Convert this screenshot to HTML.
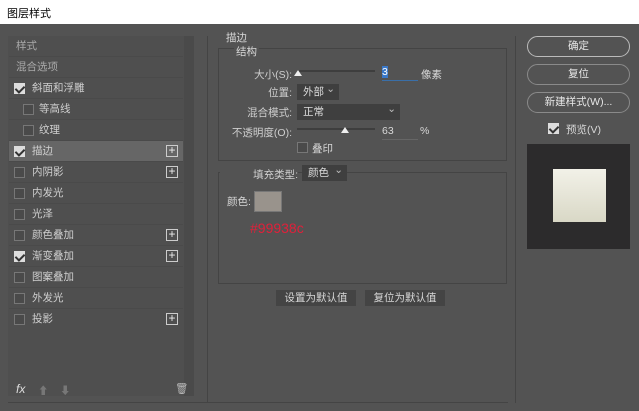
<!DOCTYPE html><html><head><meta charset="utf-8"><style>
*{margin:0;padding:0;box-sizing:border-box}
body{width:639px;height:411px;background:#535353;font-family:"Liberation Sans","Noto Sans CJK SC",sans-serif;font-size:10.5px;color:#d8d8d8;position:relative;overflow:hidden}
.a{position:absolute}
.title{left:0;top:0;width:639px;height:24px;background:#fff;color:#000;font-size:11px;padding:5px 7px}
.row{position:absolute;left:9px;width:174px;height:21px;border-bottom:1px solid #4a4a4a;line-height:20px;color:#cfcfcf}
.cb{position:absolute;width:11px;height:11px;border:1px solid #777;background:#4a4a4a;top:5px}
.cb.on{background:#ddd;border-color:#ddd}
.cb.on:after{content:"";position:absolute;left:2px;top:0px;width:4px;height:7px;border:solid #333;border-width:0 2px 2px 0;transform:rotate(45deg)}
.plus{position:absolute;left:166px;width:12px;height:12px;border:1px solid #ccc;color:#eee;font-size:12px;line-height:9px;text-align:center}
.btn{position:absolute;left:527px;width:103px;height:21px;border:1px solid #8a8a8a;border-radius:11px;text-align:center;line-height:19px;color:#e8e8e8}
.sel{position:absolute;background:#3f3f3f;height:16px;line-height:16px;padding-left:6px;color:#ddd}
.sel:after{content:"⌄";position:absolute;right:4px;top:-3px;color:#bbb}
.lbl{position:absolute;text-align:right;color:#cfcfcf}
</style></head><body>
<div class="a title">图层样式</div>
<div class="a" style="left:8px;top:36px;width:176px;height:360px;background:#4f4f4f"></div>
<div class="a" style="left:184px;top:36px;width:10px;height:360px;background:#4a4a4a"></div>
<div class="row" style="top:36px;padding-left:7px;color:#aaa">样式</div>
<div class="row" style="top:57px;padding-left:7px;color:#aaa">混合选项</div>
<div class="row" style="top:78px"><span class="cb on" style="left:5px"></span><span style="margin-left:23px">斜面和浮雕</span></div>
<div class="row" style="top:99px"><span class="cb" style="left:14px"></span><span style="margin-left:30px">等高线</span></div>
<div class="row" style="top:120px"><span class="cb" style="left:14px"></span><span style="margin-left:30px">纹理</span></div>
<div class="row" style="top:141px;background:#666"><span class="cb on" style="left:5px"></span><span style="margin-left:23px">描边</span><span class="plus" style="top:4px;left:157px">+</span></div>
<div class="row" style="top:162px"><span class="cb" style="left:5px"></span><span style="margin-left:23px">内阴影</span><span class="plus" style="top:4px;left:157px">+</span></div>
<div class="row" style="top:183px"><span class="cb" style="left:5px"></span><span style="margin-left:23px">内发光</span></div>
<div class="row" style="top:204px"><span class="cb" style="left:5px"></span><span style="margin-left:23px">光泽</span></div>
<div class="row" style="top:225px"><span class="cb" style="left:5px"></span><span style="margin-left:23px">颜色叠加</span><span class="plus" style="top:4px;left:157px">+</span></div>
<div class="row" style="top:246px"><span class="cb on" style="left:5px"></span><span style="margin-left:23px">渐变叠加</span><span class="plus" style="top:4px;left:157px">+</span></div>
<div class="row" style="top:267px"><span class="cb" style="left:5px"></span><span style="margin-left:23px">图案叠加</span></div>
<div class="row" style="top:288px"><span class="cb" style="left:5px"></span><span style="margin-left:23px">外发光</span></div>
<div class="row" style="top:309px;border:0"><span class="cb" style="left:5px"></span><span style="margin-left:23px">投影</span><span class="plus" style="top:4px;left:157px">+</span></div>
<div class="a" style="left:16px;top:382px;font-style:italic;color:#ddd;font-size:12px">fx</div>
<div class="a" style="left:38px;top:383px;color:#777">⬆</div>
<div class="a" style="left:60px;top:383px;color:#777">⬇</div>
<div class="a" style="left:175px;top:382px;color:#bbb">🗑</div>
<div class="a" style="left:8px;top:402px;width:500px;height:1px;background:#444"></div>
<div class="a" style="left:207px;top:36px;width:1px;height:367px;background:#444"></div>
<div class="a" style="left:515px;top:36px;width:1px;height:367px;background:#444"></div>
<div class="a" style="left:226px;top:30px">描边</div>
<div class="a" style="left:218px;top:48px;width:289px;height:113px;border:1px solid #444"></div>
<div class="a" style="left:234px;top:44px;background:#535353;padding:0 2px">结构</div>
<div class="lbl" style="left:220px;top:67px;width:72px">大小(S):</div>
<div class="a" style="left:297px;top:70px;width:78px;height:2px;background:#3e3e3e"></div>
<div class="a" style="left:294px;top:70px;width:0;height:0;border:4px solid transparent;border-bottom:6px solid #eee;border-top:0"></div>
<div class="a" style="left:382px;top:66px;width:36px;height:15px;border-bottom:1px solid #3a6fa8"><span style="background:#3a78c8;color:#fff">3</span></div>
<div class="a" style="left:421px;top:67px">像素</div>
<div class="lbl" style="left:220px;top:85px;width:72px">位置:</div>
<div class="sel" style="left:297px;top:84px;width:42px">外部</div>
<div class="lbl" style="left:220px;top:105px;width:72px">混合模式:</div>
<div class="sel" style="left:297px;top:104px;width:103px">正常</div>
<div class="lbl" style="left:210px;top:125px;width:82px">不透明度(O):</div>
<div class="a" style="left:297px;top:128px;width:78px;height:2px;background:#3e3e3e"></div>
<div class="a" style="left:341px;top:127px;width:0;height:0;border:4px solid transparent;border-bottom:6px solid #eee;border-top:0"></div>
<div class="a" style="left:382px;top:125px;width:36px;height:15px;border-bottom:1px solid #666">63</div>
<div class="a" style="left:420px;top:125px">%</div>
<span class="cb a" style="left:297px;top:142px"></span>
<div class="a" style="left:312px;top:141px">叠印</div>
<div class="a" style="left:218px;top:172px;width:289px;height:112px;border:1px solid #444"></div>
<div class="lbl" style="left:220px;top:167px;width:78px;background:#535353">填充类型:</div>
<div class="sel" style="left:302px;top:165px;width:45px">颜色</div>
<div class="a" style="left:227px;top:194px">颜色:</div>
<div class="a" style="left:254px;top:191px;width:28px;height:21px;background:#99938c;border:1px solid #777"></div>
<div class="a" style="left:250px;top:220px;color:#e0203a;font-size:14px">#99938c</div>
<div class="a" style="left:276px;top:290px;width:80px;height:16px;background:#444;text-align:center;line-height:16px">设置为默认值</div>
<div class="a" style="left:365px;top:290px;width:80px;height:16px;background:#444;text-align:center;line-height:16px">复位为默认值</div>
<div class="btn" style="top:36px;border-color:#bbb">确定</div>
<div class="btn" style="top:64px">复位</div>
<div class="btn" style="top:92px">新建样式(W)...</div>
<span class="cb on a" style="left:548px;top:123px"></span>
<div class="a" style="left:566px;top:122px">预览(V)</div>
<div class="a" style="left:527px;top:144px;width:103px;height:105px;background:#2c2b2c"></div>
<div class="a" style="left:553px;top:169px;width:53px;height:53px;background:linear-gradient(#f2f1e8,#d9d8c6)"></div>
</body></html>
